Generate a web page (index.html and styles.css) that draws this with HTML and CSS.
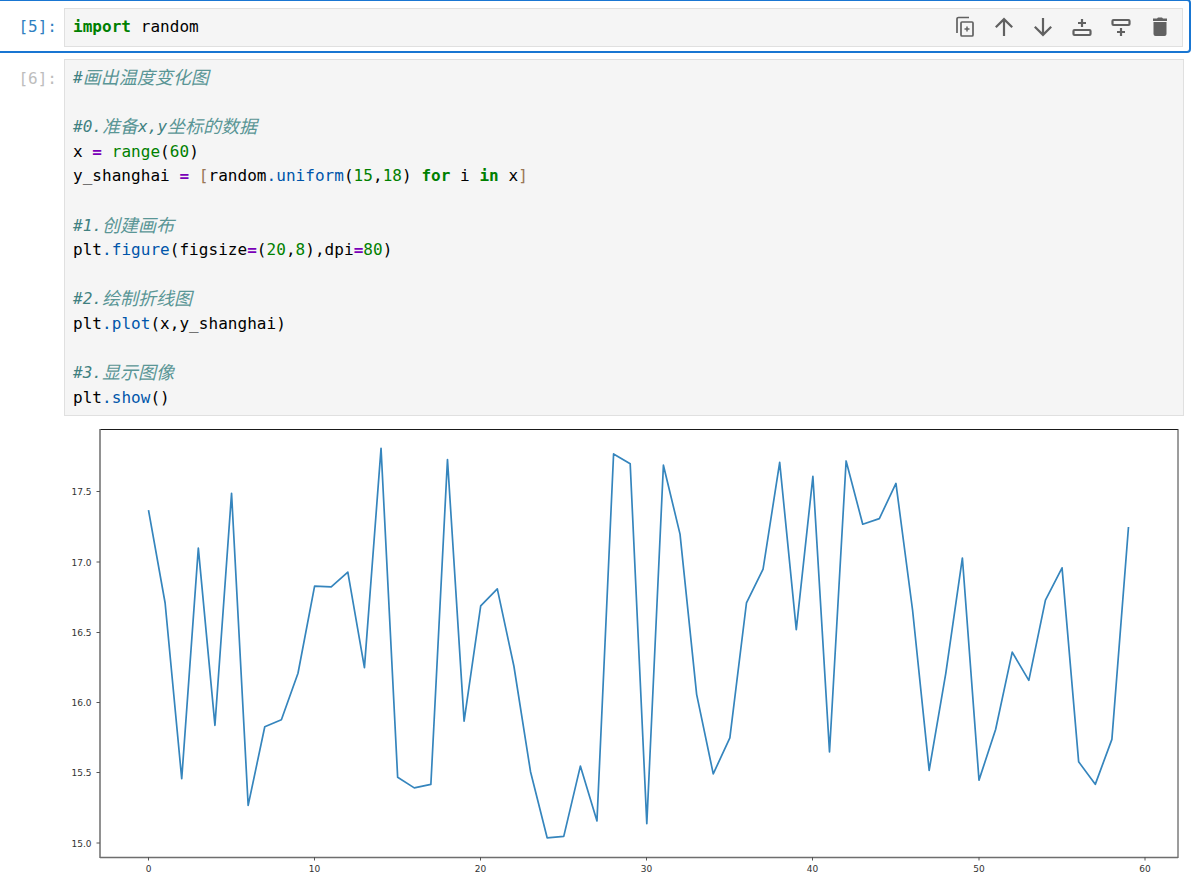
FILE: index.html
```html
<!DOCTYPE html>
<html lang="en">
<head>
    <meta charset="UTF-8">
    <meta name="viewport" content="width=device-width, initial-scale=1.0">
    <title>Notebook - temperature plot</title>
    <link rel="stylesheet" href="styles.css">
</head>
<body>

<!-- Selected cell -->
<div class="cell selected">
    <div class="prompt">[5]:</div>
    <div class="input">
<pre><span class="kw">import</span> random</pre>
        <div class="toolbar">
            <svg class="icon" viewBox="0 0 24 24"><path d="M4 18V4a1.500 1.500 0 0 1 1.500-1.500H16" fill="none" stroke="#616161" stroke-width="1.700"/><rect x="8" y="7" width="12" height="14" rx="1" fill="none" stroke="#616161" stroke-width="1.700"/><path d="M14 11.500v5M11.500 14h5" fill="none" stroke="#616161" stroke-width="1.500"/></svg>
            <svg class="icon" viewBox="0 0 24 24"><path d="M12 21V4.500M3.800 12.300L12 4.100l8.200 8.200" fill="none" stroke="#616161" stroke-width="2.200"/></svg>
            <svg class="icon" viewBox="0 0 24 24"><path d="M12 3v16.500M3.800 11.700l8.200 8.200 8.200-8.200" fill="none" stroke="#616161" stroke-width="2.200"/></svg>
            <svg class="icon" viewBox="0 0 24 24"><path d="M12 4v8M8 8h8" fill="none" stroke="#616161" stroke-width="2.200"/><rect x="3.500" y="15" width="17" height="5" rx="1" fill="none" stroke="#616161" stroke-width="2.200"/></svg>
            <svg class="icon" viewBox="0 0 24 24"><rect x="3.500" y="5" width="17" height="5" rx="1" fill="none" stroke="#616161" stroke-width="2.200"/><path d="M12 13v8M8 17h8" fill="none" stroke="#616161" stroke-width="2.200"/></svg>
            <svg class="icon" viewBox="0 0 24 24"><path d="M5.500 7h13v12a2 2 0 0 1-2 2h-9a2 2 0 0 1-2-2zM5 3.500h4l1-1h4l1 1h4V6H5z" fill="#616161"/></svg>
        </div>
    </div>
</div>

<!-- Plot cell -->
<div class="cell">
    <div class="prompt idle">[6]:</div>
    <div class="input">
<pre><span class="com">#<span class="cjk">画出温度变化图</span></span>

<span class="com">#0.<span class="cjk">准备</span>x,y<span class="cjk">坐标的数据</span></span>
x <span class="op">=</span> <span class="fn">range</span>(<span class="num">60</span>)
y_shanghai <span class="op">=</span> <span class="br">[</span>random<span class="dot">.</span><span class="call">uniform</span>(<span class="num">15</span>,<span class="num">18</span>) <span class="kw">for</span> i <span class="kw">in</span> x<span class="br">]</span>

<span class="com">#1.<span class="cjk">创建画布</span></span>
plt<span class="dot">.</span><span class="call">figure</span>(figsize<span class="op">=</span>(<span class="num">20</span>,<span class="num">8</span>),dpi<span class="op">=</span><span class="num">80</span>)

<span class="com">#2.<span class="cjk">绘制折线图</span></span>
plt<span class="dot">.</span><span class="call">plot</span>(x,y_shanghai)

<span class="com">#3.<span class="cjk">显示图像</span></span>
plt<span class="dot">.</span><span class="call">show</span>()</pre>
    </div>
</div>

<!-- Output figure -->
<div class="output">
    <svg class="figure" width="1120" height="464" viewBox="64 421 1120 464">
        <g transform="translate(148.5 843) scale(16.610 -140.600)">
            <polyline class="line" points="0,2.36 1,1.7 2,.45 3,2.09 4,.83 5,2.48 6,.26 7,.82 8,.87 9,1.2 10,1.82 11,1.815 12,1.92 13,1.24 14,2.8 15,.46 16,.385 17,.41 18,2.72 19,.86 20,1.68 21,1.8 22,1.25 23,.5 24,.03 25,.04 26,.54 27,.15 28,2.76 29,2.69 30,.13 31,2.68 32,2.19 33,1.05 34,.485 35,.74 36,1.7 37,1.94 38,2.7 39,1.51 40,2.6 41,.64 42,2.71 43,2.26 44,2.3 45,2.55 46,1.65 47,.51 48,1.2 49,2.02 50,.44 51,.8 52,1.35 53,1.15 54,1.72 55,1.95 56,.57 57,.41 58,.73 59,2.24"/>
        </g>
        <path class="frame top" d="M100 430.500H1178"/>
        <path class="frame right" d="M1178 430V859"/>
        <path class="frame side" d="M100 430V859M100 858.500H1178"/>
        <path class="ticks" d="M96.500 492.500H100M96.500 563H100M96.500 633.500H100M96.500 703.500H100M96.500 773.500H100M96.500 844H100M148.500 858v3.500M314.500 858v3.500M480.500 858v3.500M646.500 858v3.500M812.500 858v3.500M979 858v3.500M1145 858v3.500"/>
        <g class="ylabels">
            <text x="91.500" y="496">17.5</text>
            <text x="91.500" y="566.500">17.0</text>
            <text x="91.500" y="637">16.5</text>
            <text x="91.500" y="707">16.0</text>
            <text x="91.500" y="777">15.5</text>
            <text x="91.500" y="847.500">15.0</text>
        </g>
        <g class="xlabels">
            <text x="148.500" y="873">0</text>
            <text x="314.500" y="873">10</text>
            <text x="480.500" y="873">20</text>
            <text x="646.500" y="873">30</text>
            <text x="812.500" y="873">40</text>
            <text x="979" y="873">50</text>
            <text x="1145" y="873">60</text>
        </g>
    </svg>
</div>

</body>
</html>
```
FILE: styles.css
```css
html, body {
    overflow: hidden;
}
body {
    margin: 0;
    width: 1191px;
    height: 885px;
    background-color: #ffffff;
    font-family: "DejaVu Sans Mono", "Noto Sans CJK SC", monospace;
}
.cell {
    display: flex;
    padding: 5px 6px 0 0;
    border: 1px solid transparent;
    border-left: 0;
}
.cell.selected {
    height: 54px;
    padding: 7px 6px 0 0;
    border: 2px solid #1976d2;
    border-left: 0;
    border-radius: 0 4px 4px 0;
    box-sizing: border-box;
    margin-top: -1px;
}
.prompt {
    width: 57px;
    margin-right: 7px;
    flex: none;
    padding-top: 8px;
    font-size: 16px;
    line-height: 24.6px;
    text-align: right;
    color: #307fc1;
}
.cell.selected .prompt {
    padding-top: 7px;
}
.prompt.idle {
    color: #bdbdbd;
}
.input {
    flex: 1;
    display: flex;
    justify-content: space-between;
    align-items: center;
    background-color: #f5f5f5;
    border: 1px solid #e0e0e0;
}
.cell.selected .input {
    height: 37px;
}
pre {
    margin: 0;
    padding: 6px 8px 5px;
    font-family: inherit;
    font-size: 16px;
    letter-spacing: 0.04px;
    line-height: 24.6px;
    color: #000000;
}
.cell.selected pre {
    padding: 5px 8px;
}
.kw {
    font-weight: bold;
    color: #008000;
}
.com {
    font-style: italic;
    color: #408080;
}
.cjk {
    font-family: "Noto Sans CJK SC", sans-serif;
    font-size: 18px;
    line-height: 0;
    letter-spacing: 0;
    vertical-align: -1px;
    color: #5a9696;
}
.op {
    font-weight: bold;
    color: #7a00b8;
}
.fn, .num {
    color: #008000;
}
.call, .dot {
    color: #0055aa;
}
.br {
    color: #997755;
}
.toolbar {
    display: flex;
    gap: 15px;
    padding: 0 10px 2px 0;
}
.icon {
    width: 24px;
    height: 24px;
    display: block;
}
.output {
    margin-top: 3px;
}
.figure {
    display: block;
    margin-left: 64px;
}
.line {
    fill: none;
    stroke: #3585bd;
    stroke-width: 1.700px;
    vector-effect: non-scaling-stroke;
    stroke-linejoin: round;
}
.frame {
    fill: none;
    stroke-width: 1;
}
.frame.top {
    stroke: #1a1a1a;
}
.frame.right {
    stroke: #3a3a3a;
}
.frame.side {
    stroke: #6e6e6e;
    stroke-width: 1.500;
}
.ticks {
    fill: none;
    stroke: #555555;
    stroke-width: 1;
}
.ylabels text, .xlabels text {
    font-family: "DejaVu Sans", sans-serif;
    font-size: 9px;
    fill: #333333;
}
.ylabels text {
    text-anchor: end;
}
.xlabels text {
    text-anchor: middle;
}
```
